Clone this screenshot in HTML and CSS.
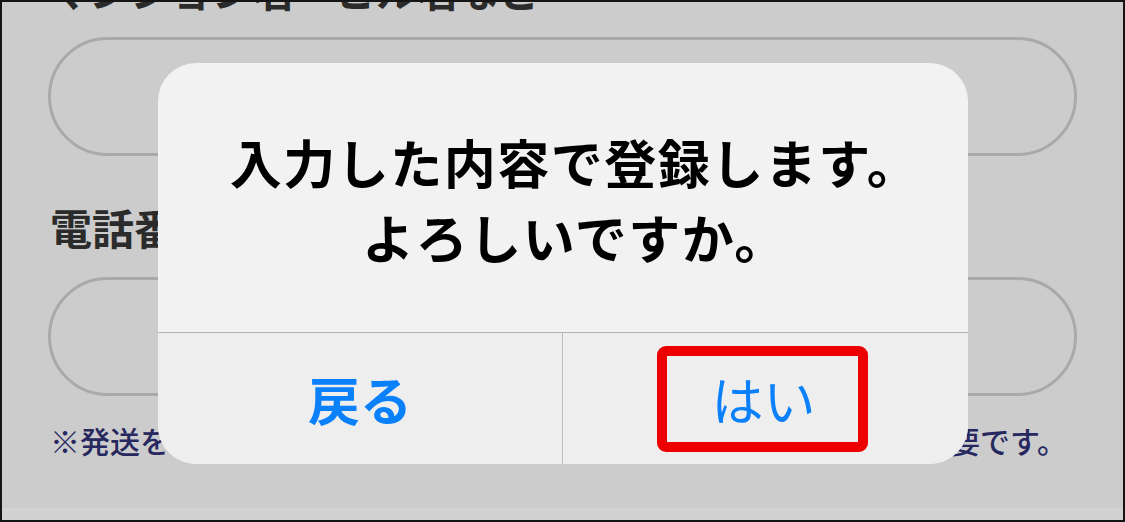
FILE: index.html
```html
<!DOCTYPE html>
<html lang="ja">
<head>
<meta charset="utf-8">
<title>登録確認</title>
<link rel="stylesheet" href="styles.css">
</head>
<body>
<div class="frame">
  <div class="form">
    <div class="label label-top">マンション名・ビル名など</div>
    <div class="field field-first"></div>
    <div class="label label-tel">電話番号</div>
    <div class="field field-second"></div>
    <p class="note">※発送をご希望の場合は、配送時のご連絡用に電話番号の入力が必要です。</p>
  </div>
  <div class="band"></div>

  <div class="dialog" role="alertdialog">
    <div class="message">入力した内容で登録します。<br>よろしいですか。</div>
    <div class="actions">
      <div class="action action-cancel">戻る</div>
      <div class="action action-ok">はい</div>
    </div>
    <div class="highlight"></div>
  </div>
</div>
</body>
</html>
```

FILE: styles.css
```css
* { box-sizing: border-box; }

html, body {
  margin: 0;
  padding: 0;
  background: #cccccc;
}

.frame {
  position: relative;
  width: 1125px;
  height: 522px;
  border: 2px solid #151515;
  background: #cccccc;
  overflow: hidden;
  display: flex;
  flex-direction: column;
  font-family: "Noto Sans CJK JP", "Noto Sans", sans-serif;
}

.form {
  padding-left: 46px;
  display: flex;
  flex-direction: column;
}

.label {
  font-size: 41px;
  line-height: 41px;
  font-weight: 700;
  color: #2b2b2b;
  white-space: nowrap;
}

.label-top {
  margin-top: -33px;
}

.label-tel {
  font-size: 42px;
  line-height: 42px;
  margin-top: 50px;
  margin-left: 2px;
}

.field {
  width: 1029px;
  height: 119px;
  border: 3px solid #a9a9a9;
  border-radius: 60px;
  background: #cccccc;
}

.field-first { margin-top: 27px; }
.field-second { margin-top: 29px; }

.note {
  margin: 29px 0 0 2px;
  font-size: 30px;
  line-height: 30px;
  font-weight: 500;
  color: #27285f;
  white-space: nowrap;
}

.band {
  margin-top: auto;
  height: 12px;
  background: #d2d2d2;
}

.dialog {
  position: absolute;
  left: 156px;
  top: 61px;
  width: 810px;
  height: 401px;
  border-radius: 38px;
  background: #f2f2f2;
  overflow: hidden;
  display: flex;
  flex-direction: column;
}

.message {
  height: 269px;
  display: flex;
  align-items: center;
  justify-content: center;
  text-align: center;
  font-size: 52px;
  line-height: 75px;
  letter-spacing: 1.5px;
  font-weight: 700;
  color: #000000;
  padding-top: 2px;
  padding-left: 24px;
}

.actions {
  flex: 1;
  display: grid;
  grid-template-columns: 1fr 1fr;
  border-top: 1px solid #b4b4b4;
  background: #eeeeef;
}

.action {
  display: flex;
  align-items: center;
  justify-content: center;
  font-size: 52px;
  color: #0a80fb;
}

.action-cancel {
  font-weight: 700;
  border-right: 1px solid #bdbdbd;
}

.action-ok {
  font-weight: 400;
  padding-right: 4px;
}

.highlight {
  position: absolute;
  left: 499px;
  top: 283px;
  width: 211px;
  height: 106px;
  border: 10px solid #ec0000;
  border-radius: 9px;
}
```
